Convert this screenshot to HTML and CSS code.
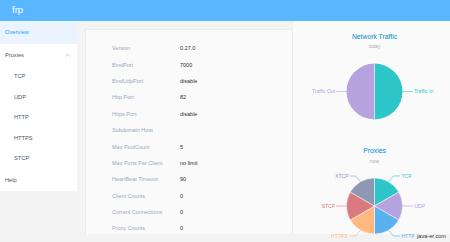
FILE: index.html
```html
<!DOCTYPE html>
<html>
<head>
<meta charset="utf-8">
<link rel="stylesheet" href="styles.css">
</head>
<body>
<header class="topbar"><span class="brand">frp</span></header>
<div class="layout">
  <nav class="sidebar">
    <div class="menu-item active">Overview</div>
    <div class="menu-item submenu-title">Proxies
      <svg class="chevron" width="5" height="3" viewBox="0 0 5 3"><polyline points="0.5,2.5 2.5,0.6 4.5,2.5" fill="none" stroke="#97a8be" stroke-width="0.6"/></svg>
    </div>
    <div class="sub-item">TCP</div>
    <div class="sub-item">UDP</div>
    <div class="sub-item">HTTP</div>
    <div class="sub-item">HTTPS</div>
    <div class="sub-item">STCP</div>
    <div class="menu-item">Help</div>
  </nav>
  <main class="main">
    <section class="card">
      <div class="row"><span class="label">Version</span><span class="value">0.27.0</span></div>
      <div class="row"><span class="label">BindPort</span><span class="value">7000</span></div>
      <div class="row"><span class="label">BindUdpPort</span><span class="value">disable</span></div>
      <div class="row"><span class="label">Http Port</span><span class="value">82</span></div>
      <div class="row"><span class="label">Https Port</span><span class="value">disable</span></div>
      <div class="row"><span class="label">Subdomain Host</span><span class="value"></span></div>
      <div class="row"><span class="label">Max PoolCount</span><span class="value">5</span></div>
      <div class="row"><span class="label">Max Ports Per Client</span><span class="value">no limit</span></div>
      <div class="row"><span class="label">HeartBeat Timeout</span><span class="value">90</span></div>
      <div class="row"><span class="label">Client Counts</span><span class="value">0</span></div>
      <div class="row"><span class="label">Current Connections</span><span class="value">0</span></div>
      <div class="row"><span class="label">Proxy Counts</span><span class="value">0</span></div>
    </section>
    <section class="charts">
      <svg class="chart" width="155" height="222" viewBox="0 0 155 222">
        <text class="c-title" x="81.5" y="17.6" text-anchor="middle">Network Traffic</text>
        <text class="c-sub" x="81.5" y="27" text-anchor="middle">today</text>
        <path d="M81.5,70.5 L81.5,42.5 A28,28 0 0 1 81.5,98.5 Z" fill="#2ec7c9"/>
        <path d="M81.5,70.5 L81.5,98.5 A28,28 0 0 1 81.5,42.5 Z" fill="#b6a2de"/>
        <line x1="81.5" y1="42.5" x2="81.5" y2="98.5" stroke="#fff" stroke-width="0.5"/>
        <line x1="109.5" y1="70.5" x2="120" y2="70.5" stroke="#2ec7c9" stroke-width="0.6"/>
        <text class="c-lbl" x="121" y="72.3" fill="#2ec7c9">Traffic In</text>
        <line x1="53.5" y1="70.5" x2="43" y2="70.5" stroke="#b6a2de" stroke-width="0.6"/>
        <text class="c-lbl" x="42" y="72.3" fill="#b6a2de" text-anchor="end">Traffic Out</text>

        <text class="c-title" x="81.5" y="131.8" text-anchor="middle">Proxies</text>
        <text class="c-sub" x="81.5" y="142" text-anchor="middle">now</text>
        <g stroke="#fff" stroke-width="0.5">
          <path d="M81.5,185 L81.5,157 A28,28 0 0 1 105.75,171 Z" fill="#2ec7c9"/>
          <path d="M81.5,185 L105.75,171 A28,28 0 0 1 105.75,199 Z" fill="#b6a2de"/>
          <path d="M81.5,185 L105.75,199 A28,28 0 0 1 81.5,213 Z" fill="#5ab1ef"/>
          <path d="M81.5,185 L81.5,213 A28,28 0 0 1 57.25,199 Z" fill="#ffb980"/>
          <path d="M81.5,185 L57.25,199 A28,28 0 0 1 57.25,171 Z" fill="#d87a80"/>
          <path d="M81.5,185 L57.25,171 A28,28 0 0 1 81.5,157 Z" fill="#8d98b3"/>
        </g>
        <g fill="none" stroke-width="0.6">
          <polyline points="95.5,160.8 100.5,155 107,155" stroke="#2ec7c9"/>
          <polyline points="109.5,185 120,185" stroke="#b6a2de"/>
          <polyline points="95.5,209.2 100.5,215 107,215" stroke="#5ab1ef"/>
          <polyline points="67.5,209.2 62.5,215 56,215" stroke="#ffb980"/>
          <polyline points="53.5,185 43,185" stroke="#d87a80"/>
          <polyline points="67.5,160.8 62.5,155 57,155" stroke="#8d98b3"/>
        </g>
        <text class="c-lbl" x="108.5" y="156.8" fill="#2ec7c9">TCP</text>
        <text class="c-lbl" x="121.5" y="186.8" fill="#b6a2de">UDP</text>
        <text class="c-lbl" x="108.5" y="216.8" fill="#5ab1ef">HTTP</text>
        <text class="c-lbl" x="54.5" y="216.8" fill="#ffb980" text-anchor="end">HTTPS</text>
        <text class="c-lbl" x="42" y="186.8" fill="#d87a80" text-anchor="end">STCP</text>
        <text class="c-lbl" x="55.5" y="156.8" fill="#8d98b3" text-anchor="end">XTCP</text>
      </svg>
    </section>
  </main>
</div>
<div class="watermark">java-er.com</div>
</body>
</html>
```
FILE: styles.css
```css
html, body {
  margin: 0;
  padding: 0;
}
body {
  width: 450px;
  height: 242px;
  overflow: hidden;
  background: #f3f3f3;
  font-family: "Liberation Sans", Arial, sans-serif;
  position: relative;
}
.topbar {
  height: 21px;
  background: #58b7ff;
  display: flex;
  align-items: center;
  padding-left: 12px;
}
.brand {
  color: #fff;
  font-size: 9.5px;
  line-height: 1;
  margin-top: -1px;
}
.layout {
  display: flex;
  align-items: flex-start;
}
.sidebar {
  width: 77px;
  flex: none;
  background: #fff;
  font-size: 5.7px;
  color: #48576a;
}
.menu-item {
  height: 22.5px;
  display: flex;
  align-items: center;
  padding-left: 5px;
  position: relative;
}
.menu-item.active {
  background: #ebf4fe;
  color: #20a0ff;
}
.chevron {
  position: absolute;
  left: 65px;
  top: 10px;
}
.sub-item {
  height: 20.5px;
  display: flex;
  align-items: center;
  padding-left: 14px;
}
.main {
  flex: 1;
  display: flex;
  padding: 8px 0 0 8px;
  height: 213px;
  box-sizing: border-box;
}
.card {
  width: 208px;
  flex: none;
  background: #fafafa;
  border: 1px solid #ececec;
  border-bottom: none;
  box-sizing: border-box;
  padding: 10px 0 0 26px;
  font-size: 5.5px;
}
.row {
  height: 16.4px;
  display: flex;
  align-items: center;
}
.label {
  width: 68px;
  color: #99a9bf;
}
.value {
  color: #1f2d3d;
}
.charts {
  flex: 1;
  margin-top: -8px;
  background: #fafafa;
}
.chart {
  display: block;
}
.c-title {
  font-family: "Liberation Sans", Arial, sans-serif;
  font-size: 6.8px;
  fill: #008acd;
}
.c-sub {
  font-family: "Liberation Sans", Arial, sans-serif;
  font-size: 4.8px;
  fill: #aaaaaa;
}
.c-lbl {
  font-family: "Liberation Sans", Arial, sans-serif;
  font-size: 5px;
}
.watermark {
  position: absolute;
  right: 4px;
  bottom: 3px;
  font-size: 5.6px;
  color: #333;
  font-family: "Liberation Sans", Arial, sans-serif;
}
```
